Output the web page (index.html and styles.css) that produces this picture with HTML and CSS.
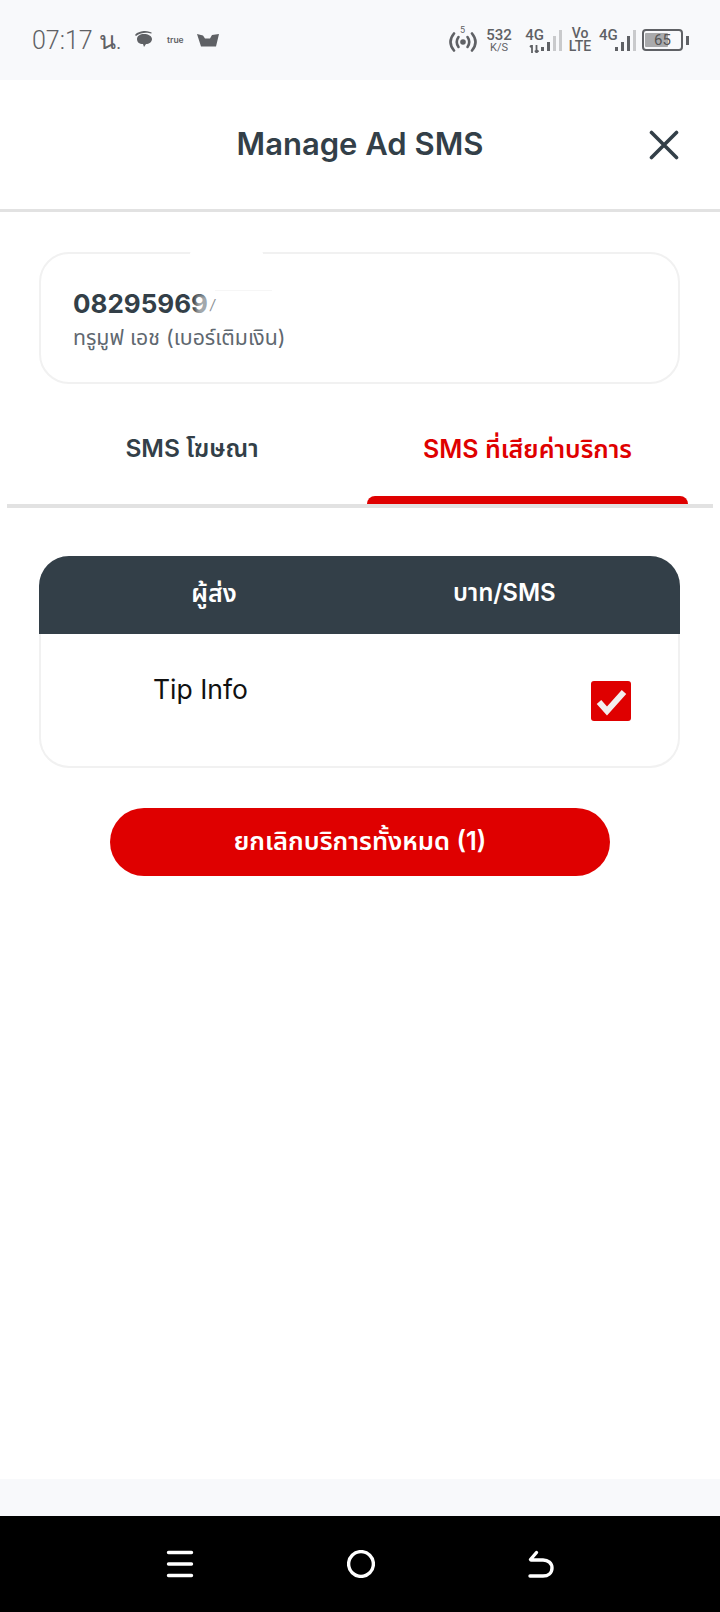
FILE: index.html
```html
<!DOCTYPE html>
<html lang="th">
<head>
<meta charset="utf-8">
<title>Manage Ad SMS</title>
<link rel="stylesheet" href="styles.css">
</head>
<body>
<div class="screen">
  <div class="status">
    <div class="status-left">
      <span class="time">07:17 น.</span>
      <svg class="i-chat" viewBox="0 0 20 18"><path d="M1 4C3 1 8 0 11 0c3 0 6 1 7 2l-1 .6C14 1.400 7 1 2 5z" fill="#5f6165"/><path d="M3 8c0-3 3-5 7-5s8 2 8 5-3 5-6 5l-2 3-1-3C5 13 3 11 3 8z" fill="#5f6165"/></svg>
      <span class="true">true</span>
      <svg class="i-crown" viewBox="0 0 22 14"><path d="M0 1l6 1.500 2 3 5 0 2-3.500 7-1-3 12.500H4z" fill="#5f6165"/></svg>
    </div>
    <div class="status-right">
      <svg class="i-hot" viewBox="0 0 28 20"><g fill="none" stroke="#5f6165" stroke-width="2.600" stroke-linecap="round"><path d="M5 1.500q-7 8.500 0 17"/><path d="M23 1.500q7 8.500 0 17"/><path d="M9.500 5q-3.500 5 0 10"/><path d="M18.500 5q3.500 5 0 10"/></g><circle cx="14" cy="10" r="2.800" fill="#5f6165"/></svg>
      <span class="sup5">5</span>
      <div class="speed"><span class="speed-n">532</span><span class="speed-u">K/S</span></div>
      <div class="net first"><span class="net-t">4G</span><svg class="i-arrows" viewBox="0 0 12 8"><path d="M3 0v8M1 2l2-2M7.500 0v7M6 5.500l1.500 2 2-2" stroke="#5f6165" stroke-width="1.800" fill="none"/></svg></div>
      <div class="bars b-first"><i class="b1"></i><i class="b2"></i><i class="b3 off"></i><i class="b4 off"></i></div>
      <div class="volte"><span>Vo</span><span>LTE</span></div>
      <span class="net-t single">4G</span>
      <div class="bars b-second"><i class="b1"></i><i class="b2"></i><i class="b3"></i><i class="b4 off"></i></div>
      <div class="battery"><div class="fill"></div><span class="pct">65</span></div>
      <div class="nub"></div>
    </div>
  </div>

  <header class="title-bar">
    <h1>Manage Ad SMS</h1>
    <svg class="close" viewBox="0 0 30 30"><path d="M2.500 2.500l25 25M27.500 2.500l-25 25" stroke="#333f48" stroke-width="3.600" stroke-linecap="round" fill="none"/></svg>
  </header>

  <section class="account">
    <div class="smudge-top"></div>
    <div class="smudge-line"></div>
    <div class="num">08295969<span class="smudge-num"></span><span class="slash">/</span></div>
    <div class="plan">ทรูมูฟ เอช (เบอร์เติมเงิน)</div>
  </section>

  <nav class="tabs">
    <div class="tab first-tab">SMS โฆษณา</div>
    <div class="tab active">SMS ที่เสียค่าบริการ</div>
  </nav>

  <section class="table">
    <div class="thead">
      <div class="th">ผู้ส่ง</div>
      <div class="th">บาท/SMS</div>
    </div>
    <div class="tbody">
      <div class="sender">Tip Info</div>
      <div class="check">
        <svg viewBox="0 0 40 40"><rect x="0" y="0" width="40" height="40" rx="3" fill="#df0000"/><path d="M8 21l8 9L33 11" stroke="#f3eeee" stroke-width="6" fill="none"/></svg>
      </div>
    </div>
  </section>

  <div class="action"><button class="cancel">ยกเลิกบริการทั้งหมด (1)</button></div>

  <div class="spacer"></div>
  <div class="foot"></div>
  <div class="navbar">
    <svg class="nav-i" viewBox="0 0 28 28"><path d="M2.500 2.500h23M2.500 14h23M2.500 25.500h23" stroke="#fff" stroke-width="3.400" stroke-linecap="round"/></svg>
    <svg class="nav-i" viewBox="0 0 28 28"><circle cx="14" cy="14" r="12.400" stroke="#fff" stroke-width="3.400" fill="none"/></svg>
    <svg class="nav-i" viewBox="0 0 28 28"><path d="M3 26h13c5 0 9-3 9-8s-4-8-9-8H4M9.500 2.500L3.500 9.500" stroke="#fff" stroke-width="3.400" stroke-linecap="round" fill="none"/></svg>
  </div>
</div>
</body>
</html>
```

FILE: styles.css
```css
* { box-sizing: border-box; }
html, body { margin: 0; padding: 0; background: #fff; }
body { font-family: Inter, "Noto Sans", "Noto Sans Thai", "Noto Sans CJK SC", sans-serif; }
.screen { width: 720px; height: 1612px; display: flex; flex-direction: column; overflow: hidden; }

.status { height: 80px; flex: none; background: #f8f9fb; display: flex; justify-content: space-between; align-items: center; padding: 0 31px 0 32px; color: #5f6165; }
.status-left { display: flex; align-items: center; }
.time { font-family: Roboto, sans-serif; font-weight: 300; font-size: 25px; width: 102px; white-space: nowrap; }
.i-chat { width: 20px; height: 18px; }
.true { font-family: Inter, sans-serif; font-size: 8.500px; font-weight: 600; margin-left: 13px; width: 17px; }
.i-crown { width: 22px; height: 14px; margin-left: 13px; }
.status-right { display: flex; align-items: center; position: relative; }
.i-hot { width: 28px; height: 20px; margin-top: 4px; }
.sup5 { position: absolute; left: 11px; top: -2px; font: 400 9px Roboto, sans-serif; }
.speed { display: flex; flex-direction: column; align-items: center; width: 26px; margin-left: 9px; font-family: Roboto, sans-serif; }
.speed-n { font-size: 15px; line-height: 14px; font-weight: 500; }
.speed-u { font-size: 11px; line-height: 11px; }
.net { display: flex; flex-direction: column; align-items: center; width: 19px; margin-left: 13px; }
.net-t { font: 500 15px/14px Roboto, sans-serif; }
.i-arrows { width: 12px; height: 8px; margin-top: 3px; }
.bars { display: flex; align-items: flex-end; gap: 3px; height: 22px; }
.b-first { margin-left: -3px; }
.b-second { margin-left: -1px; }
.bars i { display: block; width: 3px; background: #5f6165; }
.bars .b1 { height: 4px; } .bars .b2 { height: 9px; } .bars .b3 { height: 15px; } .bars .b4 { height: 21px; }
.bars .off { background: #c9cacc; }
.volte { display: flex; flex-direction: column; align-items: center; margin-left: 8px; width: 20px; font: 500 14px/13px Roboto, sans-serif; }
.single { margin-left: 9px; margin-top: -10px; width: 17px; }
.battery { position: relative; width: 41px; height: 22px; margin-left: 6px; border: 2px solid #5f6165; border-radius: 4px; display: flex; align-items: center; justify-content: center; }
.fill { position: absolute; left: 1px; top: 2px; bottom: 2px; width: 23px; background: #a9aaac; border-radius: 1px; }
.pct { position: relative; font: 400 15px Roboto, sans-serif; color: #555; }
.nub { width: 3px; height: 9px; background: #5f6165; margin-left: 3px; }

.title-bar { height: 132px; flex: none; border-bottom: 3px solid #e2e2e2; display: flex; align-items: center; justify-content: center; position: relative; padding-bottom: 3px; }
.title-bar h1 { margin: 0; font-size: 31px; font-weight: 600; color: #333f48; }
.close { position: absolute; left: 649px; top: 50px; width: 30px; height: 30px; }

.account { margin: 40px 40px 0 39px; height: 132px; flex: none; border: 2px solid #f1f1f1; border-radius: 30px; padding: 33px 32px 0; position: relative; }
.num { font-size: 26px; line-height: 34px; font-weight: 700; color: #333f48; position: relative; display: inline-block; }
.plan { font-size: 21.300px; line-height: 30px; color: #5f6870; margin-top: 1px; }
.smudge-top { position: absolute; left: 149px; top: -3px; width: 73px; height: 6px; background: #fff; border-radius: 4px; }
.smudge-line { position: absolute; left: 174px; top: 36px; width: 57px; height: 1px; background: #f6f6f6; }
.smudge-num { position: absolute; right: -2px; top: 8px; width: 14px; height: 22px; background: rgba(255,255,255,.55); filter: blur(2px); }
.slash { position: absolute; left: 100%; top: 9px; margin-left: 2px; font-size: 14px; line-height: 18px; font-weight: 400; font-style: italic; color: #8b9095; }

.tabs { margin: 0 7px; height: 124px; flex: none; display: grid; grid-template-columns: 360px 321px; border-bottom: 4px solid #e2e2e2; }
.tab { font-size: 25px; font-weight: 600; color: #333f48; text-align: center; padding-top: 47px; position: relative; white-space: nowrap; }
.first-tab { font-size: 24.500px; padding-left: 10px; }
.tab.active { color: #df0000; }
.tab.active::after { content: ""; position: absolute; left: 0; right: 0; bottom: 0; height: 8px; background: #df0000; border-radius: 9px 9px 0 0; }

.table { margin: 48px 40px 0 39px; height: 212px; flex: none; border: 2px solid #f1f1f1; border-top: 0; border-radius: 30px; position: relative; }
.thead { margin: 0 -2px; height: 78px; background: #333f48; border-radius: 30px 30px 0 0; display: grid; grid-template-columns: 350px 1fr; align-items: center; }
.th { font-size: 25px; font-weight: 600; color: #fff; text-align: center; padding-bottom: 2px; }
.th:last-child { font-size: 24px; text-align: left; padding-left: 64px; }
.tbody { display: flex; justify-content: space-between; padding: 38px 47px 0 112px; }
.sender { font-size: 26.500px; line-height: 34px; color: #111; }
.check svg { display: block; width: 40px; height: 40px; margin-top: 9px; }

.action { display: flex; justify-content: center; margin-top: 40px; flex: none; }
.cancel { width: 500px; height: 68px; border: 0; border-radius: 34px; background: #df0000; color: #fff; font: 600 25.500px Inter, "Noto Sans", "Noto Sans Thai", sans-serif; }

.spacer { flex: 1; }
.foot { height: 37px; flex: none; background: #f8f9fb; }
.navbar { height: 96px; flex: none; background: #000; display: flex; justify-content: space-between; align-items: center; padding: 0 165px 0 166px; }
.nav-i { width: 28px; height: 28px; }
```
